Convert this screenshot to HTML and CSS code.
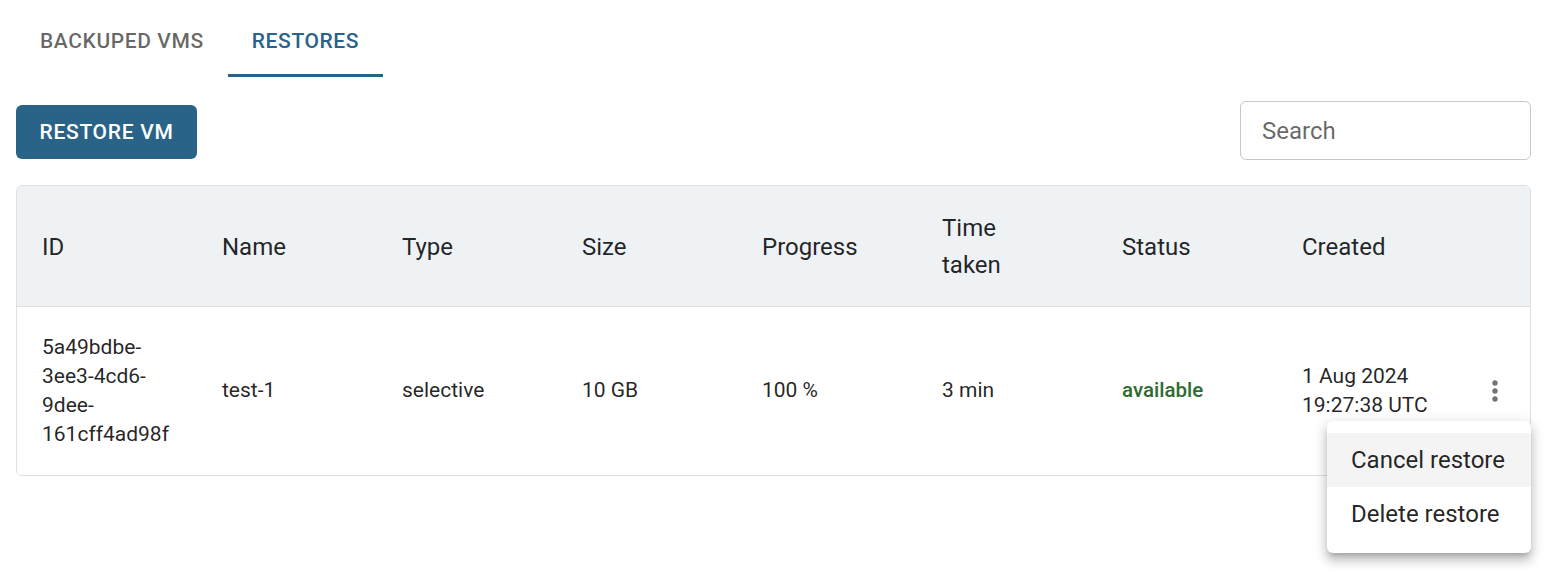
FILE: index.html
```html
<!DOCTYPE html>
<html>
<head>
<meta charset="utf-8">
<link rel="stylesheet" href="styles.css">
</head>
<body>
<div class="page">
  <div class="tabs">
    <div class="tab">BACKUPED VMS</div>
    <div class="tab active">RESTORES</div>
  </div>
  <div class="toolbar">
    <button class="btn">RESTORE VM</button>
    <div class="search">Search</div>
  </div>
  <div class="table-wrap">
    <table class="table">
      <colgroup>
        <col class="c"><col class="c"><col class="c"><col class="c"><col class="c"><col class="c"><col class="c"><col class="c"><col>
      </colgroup>
      <thead>
        <tr>
          <th>ID</th><th>Name</th><th>Type</th><th>Size</th><th>Progress</th><th>Time taken</th><th>Status</th><th>Created</th><th class="act"></th>
        </tr>
      </thead>
      <tbody>
        <tr>
          <td>5a49bdbe-3ee3-4cd6-9dee-161cff4ad98f</td>
          <td>test-1</td>
          <td>selective</td>
          <td>10 GB</td>
          <td>100 %</td>
          <td>3 min</td>
          <td><span class="status">available</span></td>
          <td>1 Aug 2024 19:27:38 UTC</td>
          <td class="act">
            <span class="kebab">
              <svg width="8" height="22" viewBox="0 0 8 22"><circle cx="4" cy="3" r="2.7" fill="#757575"/><circle cx="4" cy="11" r="2.7" fill="#757575"/><circle cx="4" cy="19" r="2.7" fill="#757575"/></svg>
            </span>
          </td>
        </tr>
      </tbody>
    </table>
  </div>
  <div class="menu">
    <div class="menu-item hover">Cancel restore</div>
    <div class="menu-item">Delete restore</div>
  </div>
</div>
</body>
</html>
```
FILE: styles.css
```css
* { box-sizing: border-box; }
html, body { margin: 0; padding: 0; background: #fff; }
body { font-family: Roboto, "Liberation Sans", sans-serif; color: rgba(0,0,0,0.87); min-height: 574px; }
.page { position: relative; padding: 0 15px 0 16px; min-height: 574px; }
.tabs { display: flex; height: 77px; }
.tab {
  padding: 8px 24px 0;
  display: flex; align-items: center;
  font-size: 21px; font-weight: 500; letter-spacing: 0.6px;
  color: rgba(0,0,0,0.6);
  border-bottom: 3px solid transparent;
}
.tab.active { color: #2a6389; border-bottom-color: #2a6389; }
.toolbar { display: flex; justify-content: space-between; align-items: center; margin-top: 24px; }
.btn {
  font-family: inherit; font-size: 21px; font-weight: 500; letter-spacing: 0.7px;
  color: #fff; background: #2a6388; border: 0; border-radius: 6px;
  height: 54px; width: 181px; margin-top: 3px; padding: 0;
}
.search {
  width: 291px; height: 59px; border: 1px solid #c8c8c8; border-radius: 6px;
  font-size: 24px; color: rgba(0,0,0,0.6); padding-left: 21px;
  display: flex; align-items: center;
}
.table-wrap { margin-top: 25px; border: 1px solid #e0e0e0; border-radius: 6px; }
.table { width: 100%; border-collapse: collapse; table-layout: fixed; font-size: 21px; }
.table col.c { width: 180px; }
.table th, .table td { text-align: left; vertical-align: middle; padding: 0 20px 0 25px; }
.table th { padding: 3px 55px 0 25px; }
.table th.act, .table td.act { padding: 0; }
.table thead tr { background: #eef2f5; height: 120px; }
.table th { font-weight: 400; font-size: 24px; line-height: 37px; border-bottom: 1px solid #e0e0e0; }
.table tbody tr { height: 169px; }
.table td { line-height: 29px; }
.status { color: #2e6b30; font-weight: 500; font-size: 20.5px; }
.kebab { display: flex; justify-content: center; margin-left: 2px; }
.menu {
  position: absolute; left: 1327px; top: 421px; width: 204px;
  background: #fff; border-radius: 6px; padding: 12px 0;
  box-shadow: 0 5px 5px -3px rgba(0,0,0,0.2), 0 8px 10px 1px rgba(0,0,0,0.14), 0 3px 14px 2px rgba(0,0,0,0.12);
}
.menu-item { height: 54px; display: flex; align-items: center; padding-left: 24px; font-size: 24px; }
.menu-item.hover { background: #f4f4f4; }
```
